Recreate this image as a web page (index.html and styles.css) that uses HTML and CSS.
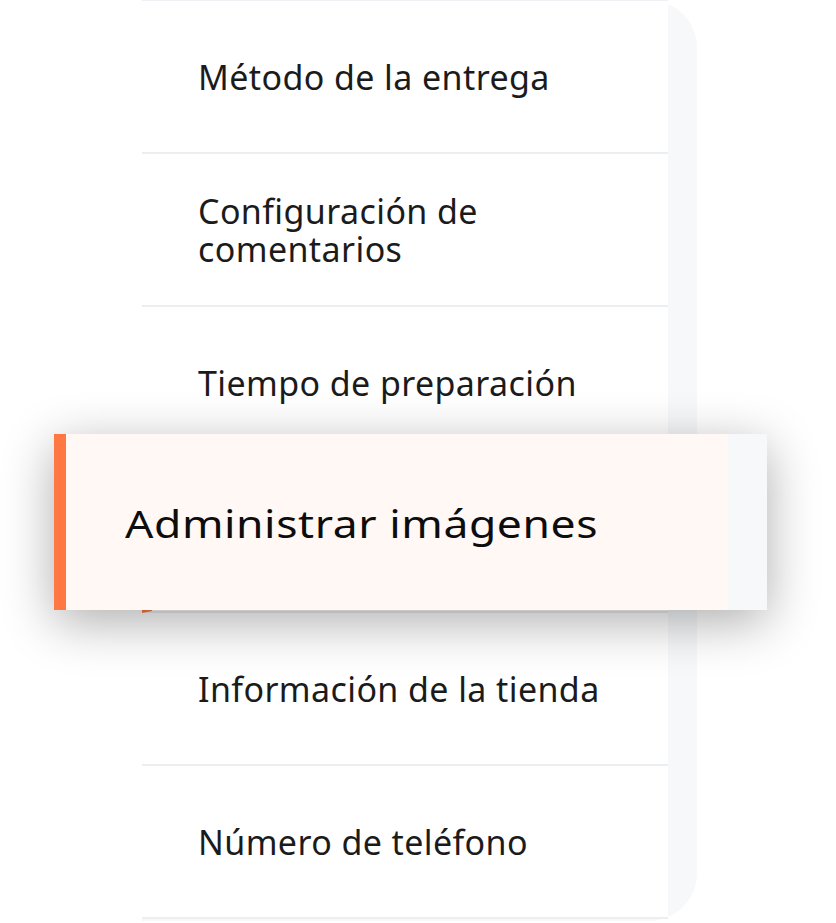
FILE: index.html
```html
<!DOCTYPE html>
<html lang="es">
<head>
  <meta charset="UTF-8" />
  <meta name="viewport" content="width=device-width, initial-scale=1.0"/>
  <title>Ajustes de la tienda</title>
  <link rel="stylesheet" href="styles.css">
</head>
<body>

  <div class="panel">
    <ul class="menu">
      <li class="item"><span>Método de la entrega</span></li>
      <li class="item"><span>Configuración de<br>comentarios</span></li>
      <li class="item"><span>Tiempo de preparación</span></li>
      <li class="item active"><span>Administrar imágenes</span></li>
      <li class="item"><span>Información de la tienda</span></li>
      <li class="item"><span>Número de teléfono</span></li>
    </ul>

    <!-- elemento activo ampliado -->
    <div class="focus">
      <div class="focus-body"><span class="focus-label">Administrar imágenes</span></div>
      <div class="focus-side"></div>
    </div>
  </div>

</body>
</html>
```

FILE: styles.css
```css
body {
  margin: 0;
  background: #fff;
  font-family: "Noto Sans", "Open Sans", sans-serif;
  color: #1b1b1b;
}
.panel {
  position: relative;
  width: 555px;
  height: 921px;
  margin-left: 142px;
  background: #f7f8fa;
  border-radius: 0 48px 48px 0;
}
.menu {
  list-style: none;
  margin: 0;
  padding: 0;
  width: 526px;
  background: #fff;
  border-top: 1px solid #eef0f3;
}
.item {
  height: 151px;
  display: flex;
  align-items: center;
  padding-left: 56px;
  border-bottom: 2px solid #eceef0;
  font-size: 34px;
  letter-spacing: 0.4px;
  line-height: 38px;
}
.item.active {
  border-left: 10px solid #ff7a45;
  padding-left: 46px;
}
/* the zoomed copy shows this label */
.item.active span {
  visibility: hidden;
}
.focus {
  position: absolute;
  left: -88px;
  top: 434px;
  width: 713px;
  height: 176px;
  display: flex;
  background: #fff8f5;
  border-left: 12px solid #ff7743;
  box-sizing: border-box;
  box-shadow: 0 12px 48px rgba(0, 0, 0, 0.32);
}
.focus-body {
  flex: 1;
  display: flex;
  align-items: center;
  padding-left: 59px;
}
.focus-label {
  display: inline-block;
  font-size: 39px;
  letter-spacing: 0.5px;
  color: #0d0d0d;
  transform: scaleX(1.14);
  transform-origin: left center;
}
.focus-side {
  width: 39px;
  background: #f7f8fa;
}
```
